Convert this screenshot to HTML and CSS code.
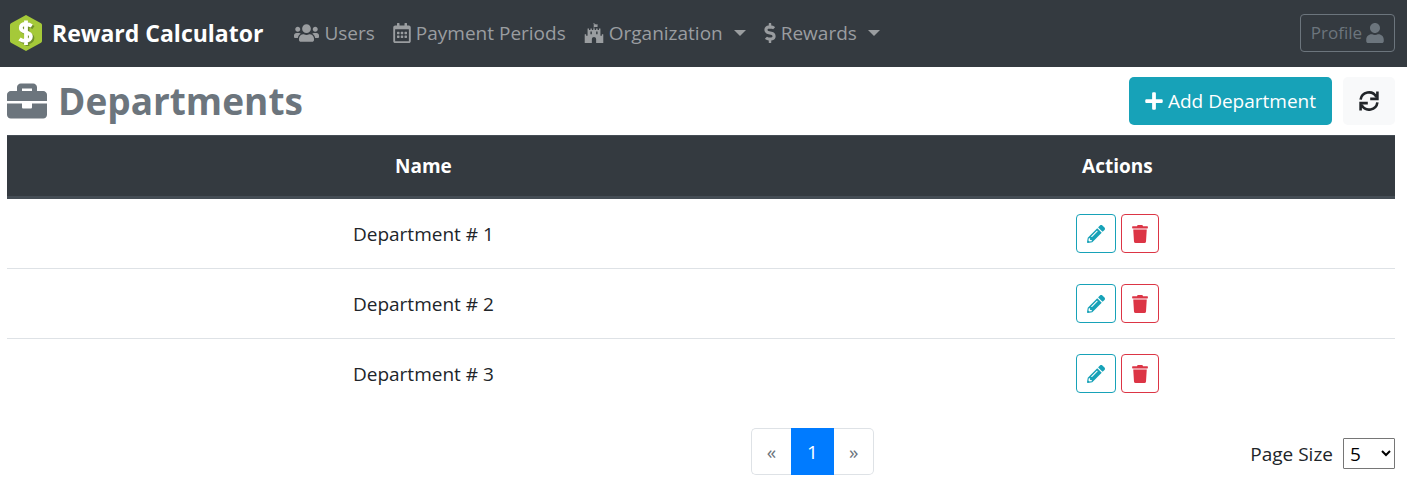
FILE: index.html
```html
<!DOCTYPE html>
<html lang="en">
<head>
<meta charset="utf-8">
<title>Reward Calculator</title>
<link rel="stylesheet" href="styles.css">
</head>
<body>
<svg class="sprite" aria-hidden="true">
  <symbol id="users" viewBox="0 0 640 512"><path d="M96 224c35.3 0 64-28.7 64-64s-28.7-64-64-64-64 28.7-64 64 28.7 64 64 64zm448 0c35.3 0 64-28.7 64-64s-28.7-64-64-64-64 28.7-64 64 28.7 64 64 64zm32 32h-64c-17.6 0-33.5 7.1-45.1 18.6 40.3 22.1 68.9 62 75.1 109.4h66c17.7 0 32-14.3 32-32v-32c0-35.3-28.7-64-64-64zm-256 0c61.9 0 112-50.1 112-112S381.9 32 320 32 208 82.1 208 144s50.1 112 112 112zm76.8 32h-8.3c-20.8 10-43.9 16-68.5 16s-47.6-6-68.5-16h-8.3C179.6 288 128 339.6 128 403.2V432c0 26.5 21.5 48 48 48h288c26.5 0 48-21.5 48-48v-28.8c0-63.6-51.6-115.2-115.2-115.2zm-223.7-13.4C161.5 263.1 145.6 256 128 256H64c-35.3 0-64 28.7-64 64v32c0 17.7 14.3 32 32 32h65.9c6.3-47.4 34.9-87.3 75.2-109.4z"/></symbol>
  <symbol id="calendar" viewBox="0 0 448 512"><path d="M148 288h-40c-6.600 0-12-5.400-12-12v-40c0-6.600 5.400-12 12-12h40c6.600 0 12 5.400 12 12v40c0 6.600-5.400 12-12 12zm108-12v-40c0-6.600-5.400-12-12-12h-40c-6.600 0-12 5.400-12 12v40c0 6.600 5.400 12 12 12h40c6.600 0 12-5.400 12-12zm96 0v-40c0-6.600-5.400-12-12-12h-40c-6.600 0-12 5.400-12 12v40c0 6.600 5.400 12 12 12h40c6.600 0 12-5.400 12-12zm-96 96v-40c0-6.600-5.400-12-12-12h-40c-6.600 0-12 5.400-12 12v40c0 6.600 5.400 12 12 12h40c6.600 0 12-5.400 12-12zm-96 0v-40c0-6.600-5.400-12-12-12h-40c-6.600 0-12 5.400-12 12v40c0 6.600 5.400 12 12 12h40c6.600 0 12-5.400 12-12zm192 0v-40c0-6.600-5.400-12-12-12h-40c-6.600 0-12 5.400-12 12v40c0 6.600 5.400 12 12 12h40c6.600 0 12-5.400 12-12zm96-260v352c0 26.500-21.500 48-48 48H48c-26.500 0-48-21.500-48-48V112c0-26.500 21.500-48 48-48h48V12c0-6.600 5.400-12 12-12h40c6.600 0 12 5.400 12 12v52h128V12c0-6.600 5.400-12 12-12h40c6.600 0 12 5.400 12 12v52h48c26.500 0 48 21.500 48 48zm-48 346V160H48v298c0 3.300 2.700 6 6 6h340c3.300 0 6-2.700 6-6z"/></symbol>
  <symbol id="fort" viewBox="0 0 512 512"><path d="M489.200 287.900h-27.400c-2.600 0-4.600 2-4.600 4.600v32h-36.600V146.200c0-2.600-2-4.600-4.600-4.600h-27.400c-2.600 0-4.600 2-4.600 4.600v32h-36.600v-32c0-2.600-2-4.600-4.600-4.600h-27.400c-2.600 0-4.600 2-4.600 4.600v32h-36.600v-32c0-6-8-4.600-11.700-4.600v-38c8.300-2 17.100-3.400 25.700-3.400 10.900 0 20.900 4.300 31.400 4.300 4.600 0 27.700-1.100 27.700-8v-60c0-2.600-2-4.600-4.600-4.600-5.100 0-15.100 4.300-24 4.300-9.700 0-20.900-4.300-32.600-4.300-8 0-16 1.100-23.700 2.900v-4.900c5.400-2.600 9.100-8.300 9.100-14.300 0-20.700-31.400-20.800-31.400 0 0 6 3.700 11.700 9.100 14.300v111.700c-3.700 0-11.700-1.400-11.700 4.600v32h-36.600v-32c0-2.600-2-4.600-4.600-4.600h-27.400c-2.600 0-4.600 2-4.600 4.600v32h-36.600v-32c0-2.600-2-4.600-4.600-4.600H96c-2.600 0-4.600 2-4.600 4.600v178.300H54.800v-32c0-2.600-2-4.600-4.600-4.600H22.800c-2.600 0-4.600 2-4.600 4.600V512h182.900v-96c0-72.600 109.700-72.600 109.700 0v96h182.900V292.500c.1-2.600-1.900-4.600-4.500-4.600zm-288.100-4.500c0 2.600-2 4.600-4.600 4.600h-27.400c-2.600 0-4.600-2-4.600-4.600v-64c0-2.600 2-4.600 4.600-4.600h27.400c2.600 0 4.600 2 4.600 4.600v64zm146.400 0c0 2.600-2 4.600-4.600 4.600h-27.400c-2.600 0-4.600-2-4.600-4.600v-64c0-2.600 2-4.600 4.600-4.600h27.400c2.600 0 4.600 2 4.600 4.600v64z"/></symbol>
  <symbol id="dollar" viewBox="0 0 288 512"><path d="M209.200 233.400l-108-31.600C88.700 198.200 80 186.500 80 173.500c0-16.300 13.200-29.500 29.500-29.500h66.300c12.200 0 24.200 3.700 34.200 10.500 6.100 4.100 14.300 3.100 19.500-2l34.800-34c7.100-6.900 6.100-18.400-1.800-24.500C238 74.800 207.400 64.100 176 64V16c0-8.800-7.200-16-16-16h-32c-8.800 0-16 7.200-16 16v48h-2.500C45.800 64-5.400 118.700.5 183.600c4.200 46.100 39.400 83.600 83.800 96.600l102.500 30c12.500 3.700 21.200 15.300 21.200 28.300 0 16.300-13.200 29.500-29.500 29.500h-66.300C100 368 88 364.300 78 357.500c-6.100-4.100-14.300-3.100-19.500 2l-34.800 34c-7.100 6.900-6.100 18.400 1.800 24.500 24.500 19.200 55.100 29.900 86.500 30v48c0 8.800 7.200 16 16 16h32c8.800 0 16-7.200 16-16v-48.200c46.600-.9 90.300-28.600 105.700-72.700 21.500-61.600-14.600-124.800-72.500-141.700z"/></symbol>
  <symbol id="user" viewBox="0 0 448 512"><path d="M224 256c70.700 0 128-57.300 128-128S294.700 0 224 0 96 57.300 96 128s57.300 128 128 128zm89.600 32h-16.700c-22.200 10.200-46.900 16-72.900 16s-50.600-5.800-72.900-16h-16.700C60.200 288 0 348.200 0 422.400V464c0 26.500 21.500 48 48 48h352c26.500 0 48-21.500 48-48v-41.600c0-74.200-60.200-134.400-134.400-134.400z"/></symbol>
  <symbol id="briefcase" viewBox="0 0 512 512"><path d="M320 336c0 8.840-7.160 16-16 16h-96c-8.840 0-16-7.160-16-16v-48H0v144c0 25.600 22.400 48 48 48h416c25.600 0 48-22.400 48-48V288H320v48zm144-208h-80V80c0-25.600-22.400-48-48-48H176c-25.600 0-48 22.400-48 48v48H48c-25.600 0-48 22.400-48 48v80h512v-80c0-25.600-22.400-48-48-48zm-144 0H192V96h128v32z"/></symbol>
  <symbol id="plus" viewBox="0 0 448 512"><path d="M416 208H272V64c0-17.670-14.330-32-32-32h-32c-17.670 0-32 14.330-32 32v144H32c-17.670 0-32 14.330-32 32v32c0 17.670 14.330 32 32 32h144v144c0 17.670 14.330 32 32 32h32c17.670 0 32-14.330 32-32V304h144c17.670 0 32-14.330 32-32v-32c0-17.670-14.330-32-32-32z"/></symbol>
  <symbol id="sync" viewBox="0 0 20 20"><path fill="none" stroke="currentColor" stroke-width="2.600" d="M1.600 8.700A8.400 8.400 0 0 1 17.300 5.800M18.400 .6V7.900H11.200M18.400 11.300A8.400 8.400 0 0 1 2.700 14.200M1.600 19.400V12.100H8.800"/></symbol>
  <symbol id="pencil" viewBox="0 0 512 512"><path d="M497.900 142.100l-46.100 46.100c-4.700 4.700-12.300 4.700-17 0l-111-111c-4.700-4.700-4.700-12.300 0-17l46.100-46.100c18.700-18.700 49.100-18.700 67.900 0l60.100 60.100c18.800 18.700 18.800 49.100 0 67.900zM284.200 99.800L21.600 362.400.4 483.900c-2.900 16.400 11.400 30.600 27.800 27.800l121.500-21.300 262.600-262.600c4.700-4.700 4.700-12.300 0-17l-111-111c-4.800-4.700-12.400-4.700-17.100 0zM124.100 339.900c-5.500-5.500-5.500-14.300 0-19.800l154-154c5.500-5.500 14.300-5.500 19.800 0s5.500 14.300 0 19.800l-154 154c-5.500 5.500-14.300 5.500-19.800 0zM88 424h48v36.300l-64.500 11.300-31.100-31.100L51.700 376H88v48z"/></symbol>
  <symbol id="trash" viewBox="0 0 448 512"><path d="M432 32H312l-9.400-18.700A24 24 0 0 0 281.100 0H166.800a23.720 23.720 0 0 0-21.400 13.300L136 32H16A16 16 0 0 0 0 48v32a16 16 0 0 0 16 16h416a16 16 0 0 0 16-16V48a16 16 0 0 0-16-16zM53.200 467a48 48 0 0 0 47.900 45h245.800a48 48 0 0 0 47.900-45L416 128H32z"/></symbol>
</svg>
<header class="navbar">
  <a class="brand" href="#">
    <svg class="logo" viewBox="0 0 32 36" aria-hidden="true">
      <path fill="#a5c939" d="M16 0 31 8.300Q32 9 32 10V26Q32 27 31 27.700L16 36 1 27.700Q0 27 0 26V10Q0 9 1 8.300Z"/>
      <g fill="none" stroke-width="3.800">
        <path stroke="#71902b" d="M23.500 12.500Q20 10.300 17.500 10.300C13.500 10.300 12 12.200 12 14.200 12 19.600 22.500 17.300 22.500 23 22.500 25.800 20 27.400 17 27.400Q13.500 27.400 11 25.500M17.500 7V31"/>
        <path stroke="#fff" d="M21.800 11Q18.500 9 16 9C12.200 9 10.800 11 10.800 13 10.800 18.300 20.900 16 20.900 21.500 20.900 24.400 18.500 25.900 15.500 25.900Q12 25.900 9.500 24M16 5.500V30"/>
      </g>
    </svg>
    <span>Reward Calculator</span>
  </a>
  <nav class="menu" aria-label="Main">
    <a href="#"><svg class="icon wide"><use href="#users"/></svg>Users</a>
    <a href="#"><svg class="icon"><use href="#calendar"/></svg>Payment Periods</a>
    <a href="#"><svg class="icon square"><use href="#fort"/></svg>Organization<span class="caret"></span></a>
    <a href="#"><svg class="icon narrow"><use href="#dollar"/></svg>Rewards<span class="caret"></span></a>
  </nav>
  <button class="profile" type="button">Profile<svg class="icon"><use href="#user"/></svg></button>
</header>
<main>
  <div class="heading">
    <h1><svg class="title-icon"><use href="#briefcase"/></svg>Departments</h1>
    <button class="btn add" type="button"><svg class="icon"><use href="#plus"/></svg>Add Department</button>
    <button class="btn refresh" type="button" aria-label="Refresh"><svg class="icon square"><use href="#sync"/></svg></button>
  </div>
  <table>
    <thead><tr><th scope="col" class="name">Name</th><th scope="col">Actions</th></tr></thead>
    <tbody>
      <tr><td>Department # 1</td><td><div class="actions"><button class="edit" type="button" aria-label="Edit"><svg class="small-icon"><use href="#pencil"/></svg></button><button class="delete" type="button" aria-label="Delete"><svg class="small-icon"><use href="#trash"/></svg></button></div></td></tr>
      <tr><td>Department # 2</td><td><div class="actions"><button class="edit" type="button" aria-label="Edit"><svg class="small-icon"><use href="#pencil"/></svg></button><button class="delete" type="button" aria-label="Delete"><svg class="small-icon"><use href="#trash"/></svg></button></div></td></tr>
      <tr><td>Department # 3</td><td><div class="actions"><button class="edit" type="button" aria-label="Edit"><svg class="small-icon"><use href="#pencil"/></svg></button><button class="delete" type="button" aria-label="Delete"><svg class="small-icon"><use href="#trash"/></svg></button></div></td></tr>
    </tbody>
  </table>
  <footer>
    <nav class="pages" aria-label="Pagination"><button type="button" aria-label="Previous">«</button><button type="button" class="current" aria-current="page">1</button><button type="button" aria-label="Next">»</button></nav>
    <div class="size"><label for="page-size">Page Size</label><select id="page-size"><option>5</option><option>10</option><option>20</option></select></div>
  </footer>
</main>
</body>
</html>
```

FILE: styles.css
```css
* { box-sizing: border-box; }
body { margin: 0; background: #fff; color: #212529; font: 19px/30px "Open Sans", "Noto Sans", sans-serif; }
a { color: inherit; text-decoration: none; }
button, select { font: inherit; }
button { cursor: pointer; }
.sprite { display: none; }
svg { flex: none; fill: currentColor; }
.icon { width: 18px; height: 20px; }
.icon.wide { width: 25px; }
.icon.square { width: 20px; }
.icon.narrow { width: 12px; }

.navbar { display: flex; align-items: center; min-height: 67px; padding: 0 12px 2px 10px; background: #343a40; }
.brand { display: flex; align-items: center; gap: 10px; margin-right: 31px; color: #fff; font-size: 23px; font-weight: 700; }
.logo { width: 32px; height: 36px; }
.menu { display: flex; gap: 18px; color: #9a9da0; }
.menu a { display: flex; align-items: center; gap: 5px; }
.caret { margin-left: 6px; border: 6px solid transparent; border-top-color: currentColor; border-bottom: 0; }
.profile { display: flex; align-items: center; gap: 4px; height: 38px; margin-left: auto; padding: 0 10px; border: 1px solid #6c757d; border-radius: 4px; background: none; color: #6c757d; font-size: 17px; }

main { padding: 0 12px 0 7px; }
.heading { display: flex; align-items: center; gap: 11px; padding: 10px 0; }
h1 { display: flex; align-items: center; gap: 11px; margin: 0 auto 0 0; color: #6c757d; font-size: 37px; line-height: 48px; font-weight: 700; }
.title-icon { width: 40px; height: 40px; }
.btn { display: flex; align-items: center; justify-content: center; gap: 5px; height: 48px; padding: 0 16px; border: 0; border-radius: 5px; }
.add { background: #17a2b8; color: #fff; }
.refresh { background: #f8f9fa; color: #212529; }

table { width: 100%; table-layout: fixed; border-collapse: separate; border-spacing: 0; text-align: center; }
th { height: 64px; padding: 0; border-top: 1px solid #454d55; border-bottom: 3px solid #454d55; background: #343a40; color: #fff; font-weight: 700; }
.name { width: 60%; }
td { height: 70px; padding: 0; border-top: 1px solid #dee2e6; }
tbody tr:first-child td { height: 69px; border-top: 0; }
.actions { display: flex; justify-content: center; gap: 5px; }
.actions button { display: flex; align-items: center; height: 39px; padding: 0 10px; border: 1px solid; border-radius: 4px; background: none; }
.edit { color: #17a2b8; }
.delete { color: #dc3545; }
.small-icon { width: 18px; height: 18px; }
.delete .small-icon { width: 16px; }

footer { display: grid; grid-template-columns: 10fr auto 7fr; align-items: center; padding-top: 20px; }
.pages { display: flex; grid-column: 2; }
.pages button { height: 47px; padding: 0 15px; border: 1px solid #dee2e6; background: #fff; color: #6c757d; }
.pages button:first-child { border-right: 0; border-radius: 5px 0 0 5px; }
.pages button:last-child { border-left: 0; border-radius: 0 5px 5px 0; }
.pages .current { padding: 0 15px; border-color: #007bff; background: #007bff; color: #fff; }
.size { display: flex; align-items: center; justify-content: flex-end; gap: 10px; padding-top: 4px; }
select { width: 52px; height: 31px; padding: 0 2px; border: 1px solid #767676; border-radius: 1px; background: #fff; color: #000; }
```
